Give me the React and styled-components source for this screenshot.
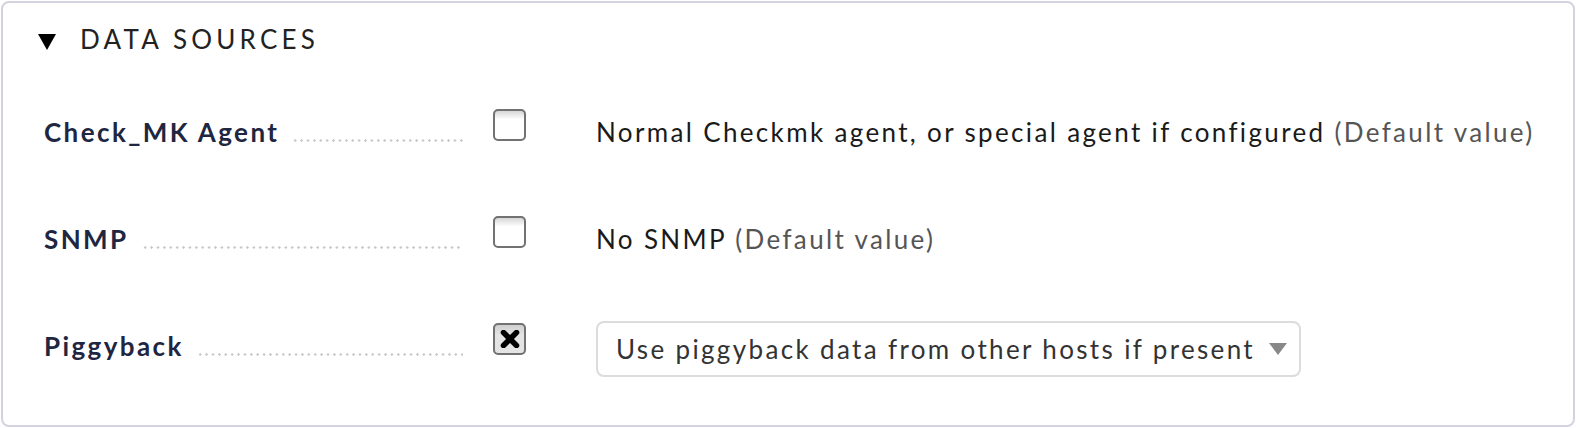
import React from "react";
import styled, { createGlobalStyle } from "styled-components";

const GlobalStyle = createGlobalStyle`
  html, body {
    margin: 0;
    padding: 0;
    background: #fff;
  }
  body {
    font-family: Lato, "Open Sans", sans-serif;
  }
`;

const rows = [
  {
    label: "Check_MK Agent",
    checked: false,
    value: "Normal Checkmk agent, or special agent if configured",
    isDefault: true,
  },
  { label: "SNMP", checked: false, value: "No SNMP", isDefault: true },
  {
    label: "Piggyback",
    checked: true,
    select: "Use piggyback data from other hosts if present",
  },
];

const App = () => {
  return (
    <>
      <GlobalStyle />
      <Frame>
        <Header>
          <Triangle />
          <Title>DATA SOURCES</Title>
        </Header>
        <Rows>
          {rows.map((r) => (
            <Row key={r.label}>
              <Legend>
                <LabelText>{r.label}</LabelText>
                <Dots />
              </Legend>
              <CheckCell>
                <CheckBox checked={r.checked}>{r.checked && <Cross />}</CheckBox>
              </CheckCell>
              <ValueCell>
                {r.select ? (
                  <Select>
                    {r.select}
                    <Arrow />
                  </Select>
                ) : (
                  <>
                    {r.value}
                    {r.isDefault && <DefaultHint> (Default value)</DefaultHint>}
                  </>
                )}
              </ValueCell>
            </Row>
          ))}
        </Rows>
      </Frame>
    </>
  );
};

// X mark inside the checked box
const Cross = () => (
  <svg width="22" height="18" viewBox="0 0 22 18">
    <path
      d="M4.5 2.5 L17.5 15.5 M17.5 2.5 L4.5 15.5"
      stroke="#000"
      strokeWidth="5.5"
      strokeLinecap="round"
    />
  </svg>
);

const Frame = styled.div`
  box-sizing: border-box;
  margin: 1px;
  height: 426px;
  border: 2px solid #d2d3df;
  border-radius: 8px;
  background: #fff;
`;

const Header = styled.div`
  display: flex;
  align-items: center;
  height: 72px;
  padding-left: 35px;
`;

const Triangle = styled.span`
  width: 0;
  height: 0;
  border-left: 9.5px solid transparent;
  border-right: 9.5px solid transparent;
  border-top: 16px solid #000;
  margin-top: 6px;
  margin-right: 24px;
`;

const Title = styled.div`
  font-size: 26px;
  letter-spacing: 4.2px;
  color: #222;
`;

const Rows = styled.div`
  display: flex;
  flex-direction: column;
`;

const Row = styled.div`
  display: flex;
  align-items: flex-start;
  height: 107px;
  padding-top: 36px;
  box-sizing: border-box;
`;

const Legend = styled.div`
  display: flex;
  align-items: baseline;
  width: 460px;
  padding-left: 41px;
  box-sizing: border-box;
  margin-top: 5px;
`;

const LabelText = styled.span`
  font-size: 26px;
  font-weight: 700;
  letter-spacing: 2.4px;
  color: #1e2641;
  white-space: nowrap;
  margin-right: 13px;
`;

const Dots = styled.span`
  flex: 1;
  height: 3px;
  background-image: radial-gradient(circle, #c8c8c8 1.1px, transparent 1.4px);
  background-size: 6.4px 3px;
  background-repeat: repeat-x;
`;

const CheckCell = styled.div`
  width: 133px;
  padding-left: 30px;
  box-sizing: border-box;
  margin-top: -2px;
`;

const CheckBox = styled.div`
  box-sizing: border-box;
  width: 33px;
  height: 32px;
  border: 2px solid #727272;
  border-radius: 5px;
  background: ${(p) =>
    p.checked
      ? "linear-gradient(#cfcfcf, #e4e4e4 35%, #e4e4e4)"
      : "linear-gradient(#d6d6d6, #fff 30%, #fff)"};
  display: flex;
  align-items: center;
  justify-content: center;
`;

const ValueCell = styled.div`
  font-size: 26px;
  letter-spacing: 2.35px;
  color: #1a1a1a;
  margin-top: 5px;
  white-space: nowrap;
`;

const DefaultHint = styled.span`
  color: #555;
`;

const Select = styled.div`
  box-sizing: border-box;
  display: flex;
  align-items: center;
  width: 705px;
  height: 56px;
  margin-top: -9px;
  padding-left: 18px;
  border: 2px solid #dcdcdc;
  border-radius: 8px;
  color: #333;
`;

const Arrow = styled.span`
  width: 0;
  height: 0;
  margin-left: 14px;
  border-left: 9px solid transparent;
  border-right: 9px solid transparent;
  border-top: 12px solid #888;
`;

export default App;
